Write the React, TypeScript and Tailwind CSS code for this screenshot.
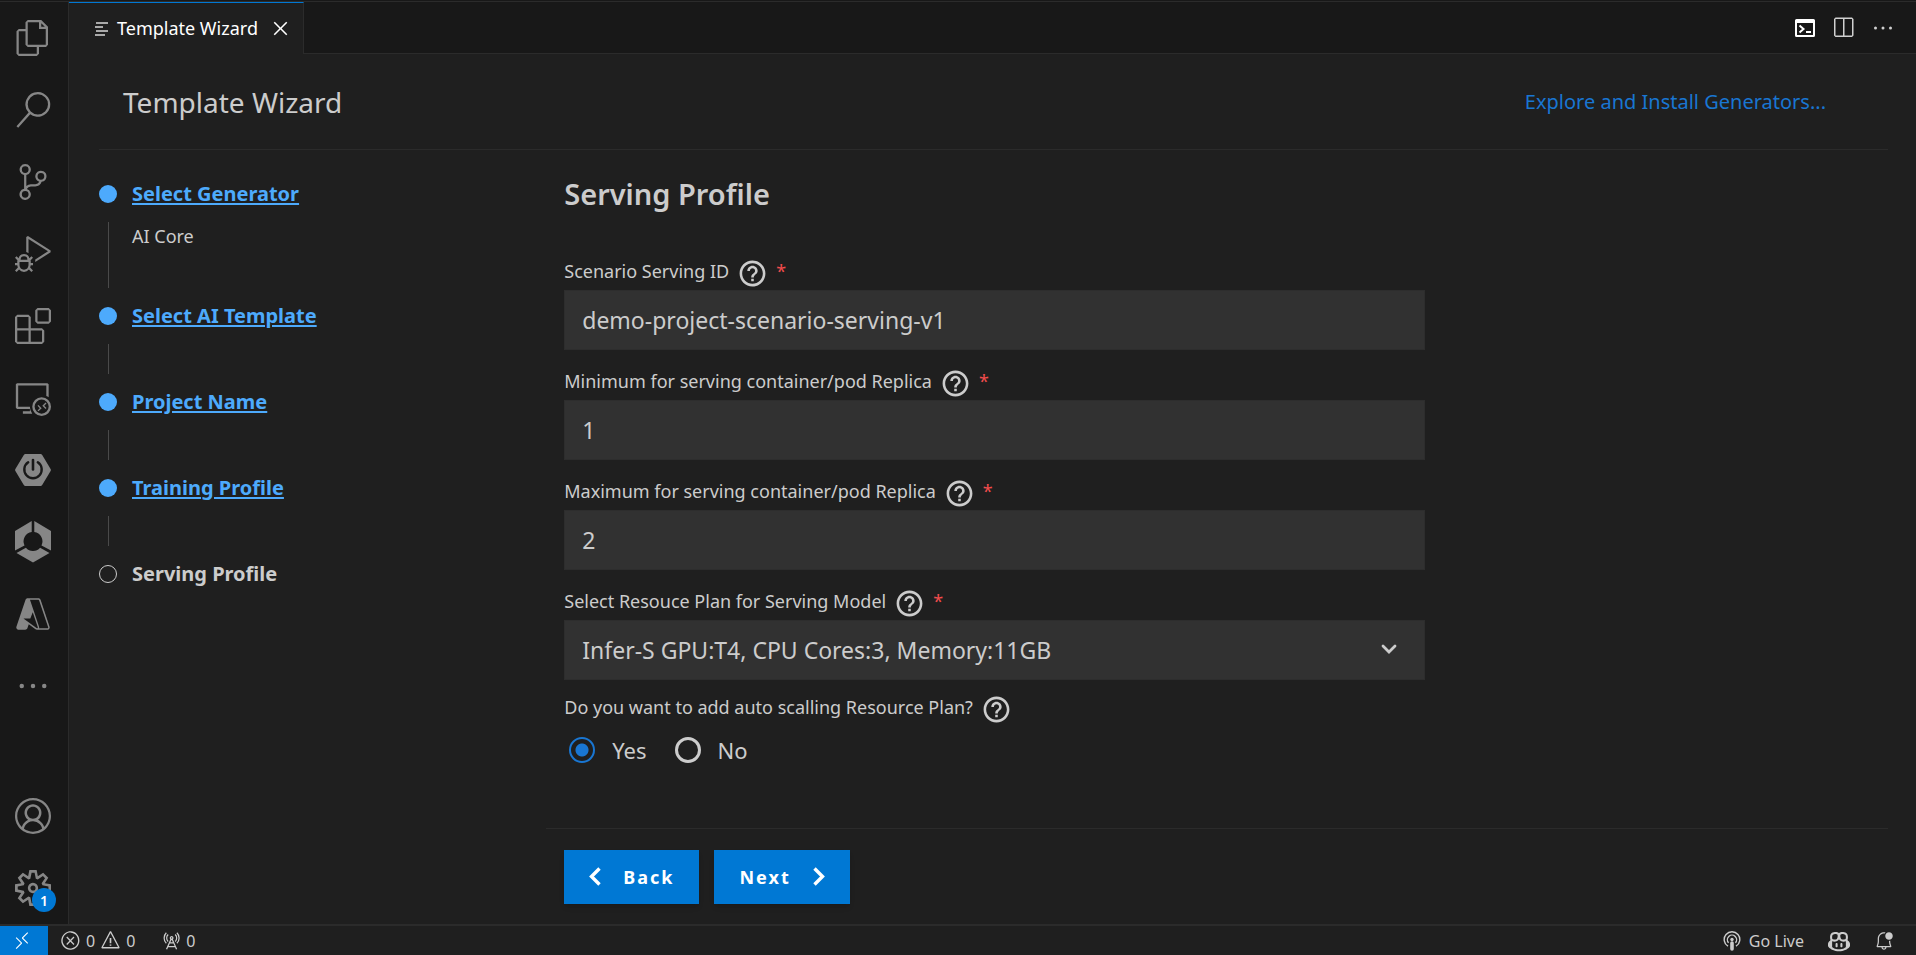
import { useState } from "react";
import type { ReactNode } from "react";
import {
  VscAccount,
  VscAzure,
  VscBellDot,
  VscClose,
  VscCopilot,
  VscDebugAlt,
  VscEllipsis,
  VscError,
  VscExtensions,
  VscFiles,
  VscRadioTower,
  VscRemote,
  VscRemoteExplorer,
  VscSearch,
  VscSettingsGear,
  VscSourceControl,
  VscSplitHorizontal,
  VscWarning,
} from "react-icons/vsc";
import { MdHelpOutline } from "react-icons/md";

function PowerHexIcon() {
  return (
    <svg width="36" height="36" viewBox="0 0 36 36" aria-hidden="true">
      <path d="M10.500 2h15a2 2 0 0 1 1.700 1l8.400 14a2 2 0 0 1 0 2l-8.400 14a2 2 0 0 1-1.700 1h-15a2 2 0 0 1-1.700-1L.4 19a2 2 0 0 1 0-2L8.800 3a2 2 0 0 1 1.700-1z" fill="#868686" />
      <path d="M18 8v9.500" stroke="#181818" strokeWidth="2.600" strokeLinecap="round" fill="none" />
      <path d="M13.200 10.300a8.700 8.700 0 1 0 9.600 0" stroke="#181818" strokeWidth="2.400" strokeLinecap="round" fill="none" />
    </svg>
  );
}

function HexRingIcon() {
  return (
    <svg width="36" height="42" viewBox="0 0 36 42" aria-hidden="true">
      <path d="M16.700 0v11A9.400 9.400 0 0 0 9.500 24.500L0 29.500V10z" fill="#868686" />
      <path d="M19.300 0v11A9.400 9.400 0 0 1 26.500 24.500L36 29.500V10z" fill="#868686" />
      <path d="M1.500 32l9.400-5.200a9.400 9.400 0 0 0 14.200 0l9.400 5.200L18 41.500z" fill="#868686" />
    </svg>
  );
}

function LinesIcon() {
  return (
    <svg width="14" height="14" viewBox="0 0 14 14" fill="none" stroke="#d8d8d8" strokeWidth="1.500" aria-hidden="true">
      <path d="M1 1h12M0 5h8M1 9h12M0 13h10" />
    </svg>
  );
}

function TerminalIcon() {
  return (
    <svg width="20" height="18" viewBox="0 0 20 18" aria-hidden="true">
      <path fillRule="evenodd" d="M1.500 0h17A1.500 1.500 0 0 1 20 1.500v15a1.500 1.500 0 0 1-1.500 1.500h-17A1.500 1.500 0 0 1 0 16.500v-15A1.500 1.500 0 0 1 1.500 0zM2 4v12h16V4z" fill="#fff" />
      <path d="M4.500 6.500L8.500 10l-4 3.500" fill="none" stroke="#fff" strokeWidth="2" />
      <path d="M11 13h5" stroke="#fff" strokeWidth="2" />
    </svg>
  );
}

function BroadcastIcon() {
  return (
    <svg width="18" height="20" viewBox="0 0 18 20" fill="none" stroke="#ccc" aria-hidden="true">
      <path d="M5 15.200a7.800 7.800 0 1 1 8 0" strokeWidth="1.400" />
      <path d="M5.600 11.800a4.600 4.600 0 1 1 6.800 0" strokeWidth="1.400" />
      <circle cx="9" cy="8.500" r="1.700" fill="#ccc" stroke="none" />
      <path d="M9 12v6" strokeWidth="3.600" strokeLinecap="round" />
    </svg>
  );
}

const topItems: { name: string; icon: ReactNode }[] = [
  { name: "Explorer", icon: <VscFiles size={36} /> },
  { name: "Search", icon: <VscSearch size={36} /> },
  { name: "Source Control", icon: <VscSourceControl size={36} /> },
  { name: "Run and Debug", icon: <VscDebugAlt size={36} /> },
  { name: "Extensions", icon: <VscExtensions size={36} /> },
  { name: "Remote Explorer", icon: <VscRemoteExplorer size={36} /> },
  { name: "Spring Boot", icon: <PowerHexIcon /> },
  { name: "Project Accelerator", icon: <HexRingIcon /> },
  { name: "Azure", icon: <VscAzure size={36} /> },
  { name: "Additional Views", icon: <VscEllipsis size={36} /> },
];

function ActivityBar() {
  return (
    <nav className="flex w-[69px] shrink-0 flex-col justify-between border-r border-[#2b2b2b] bg-[#181818] pr-0.5 text-[#868686]">
      <div className="flex flex-col">
        {topItems.map((item) => (
          <button key={item.name} aria-label={item.name} className="flex h-[72px] items-center justify-center">
            {item.icon}
          </button>
        ))}
      </div>
      <div className="flex flex-col">
        <button aria-label="Accounts" className="flex h-[72px] items-center justify-center">
          <VscAccount size={36} />
        </button>
        <button aria-label="Manage" className="relative flex h-[72px] items-center justify-center">
          <VscSettingsGear size={36} />
          <span className="absolute right-2.5 bottom-3 flex size-6 items-center justify-center rounded-full bg-[#0078d4] text-[14px] font-semibold text-white">
            1
          </span>
        </button>
      </div>
    </nav>
  );
}

function TabBar() {
  return (
    <div className="flex h-[52px] shrink-0 bg-[#181818]">
      <div className="flex items-center gap-2 border-t border-r border-t-[#0078d4] border-r-[#2b2b2b] bg-[#1f1f1f] pr-2.5 pl-[26px] text-[18px] whitespace-nowrap text-white">
        <LinesIcon />
        <span>Template Wizard</span>
        <button aria-label="Close" className="ml-0.5 flex">
          <VscClose size={25} />
        </button>
      </div>
      <div className="flex flex-1 items-center justify-end gap-4 border-b border-[#2b2b2b] pr-[21px] text-[#d0d0d0]">
        <button aria-label="Open terminal">
          <TerminalIcon />
        </button>
        <button aria-label="Split editor">
          <VscSplitHorizontal size={24} />
        </button>
        <button aria-label="More actions">
          <VscEllipsis size={24} />
        </button>
      </div>
    </div>
  );
}

const steps = [
  { title: "Select Generator", detail: "AI Core" },
  { title: "Select AI Template" },
  { title: "Project Name" },
  { title: "Training Profile" },
  { title: "Serving Profile", current: true },
];

function Steps() {
  return (
    <ol className="flex w-1/4 shrink-0 flex-col pt-7 text-[20px] leading-8">
      {steps.map((step) => (
        <li key={step.title} className="flex gap-[15px]">
          <div className="flex w-[18px] flex-col items-center">
            <span className="flex h-8 items-center">
              {step.current ? (
                <span className="size-[18px] rounded-full border border-[#ccc]" />
              ) : (
                <span className="size-[18px] rounded-full bg-[#4daafc]" />
              )}
            </span>
            {!step.current && <span className="my-3 w-px flex-1 bg-[#4a4a4a]" />}
          </div>
          <div className="min-h-[86px]">
            {step.current ? (
              <span className="font-bold">{step.title}</span>
            ) : (
              <a href="#" className="font-bold text-[#4daafc] underline decoration-2 underline-offset-2">
                {step.title}
              </a>
            )}
            {step.detail && <p className="mt-2.5 mb-12 text-[18px] leading-8">{step.detail}</p>}
          </div>
        </li>
      ))}
    </ol>
  );
}

function FieldLabel({ id, text, required }: { id: string; text: string; required?: boolean }) {
  return (
    <div className="flex h-[30px] items-center gap-2 text-[18px]">
      <label htmlFor={id}>{text}</label>
      <MdHelpOutline size={31} className="mt-1 shrink-0" />
      {required && <span className="text-[#f14c4c]">*</span>}
    </div>
  );
}

const fieldClass =
  "h-[60px] w-full appearance-none border border-[#2d2d2d] bg-[#313131] px-[17px] text-[23px] text-[#ccc] outline-none";

function TextField({ id, text, value }: { id: string; text: string; value: string }) {
  return (
    <div className="flex flex-col gap-1">
      <FieldLabel id={id} text={text} required />
      <input id={id} type="text" defaultValue={value} className={fieldClass} />
    </div>
  );
}

const radioClass =
  "size-[26px] appearance-none rounded-full border-[3px] border-[#ccc] checked:border-2 checked:border-[#1976d2] checked:bg-[radial-gradient(circle,#1976d2_6px,transparent_7px)]";

export default function App() {
  const [scaling, setScaling] = useState("yes");
  return (
    <div className="flex min-h-screen flex-col bg-[#1f1f1f] font-['Noto_Sans',sans-serif] text-[#ccc]">
      <div className="h-0.5 shrink-0 border-b border-[#2b2b2b] bg-[#181818]" />
      <div className="flex flex-1">
        <ActivityBar />
        <div className="flex min-w-0 flex-1 flex-col">
          <TabBar />
          <main className="flex flex-1 flex-col pr-7 pl-[30px]">
            <header className="flex h-24 items-center justify-between border-b border-[#2b2b2b] pr-[62px] pl-6">
              <h1 className="text-[28px]">Template Wizard</h1>
              <a href="#" className="text-[20px] text-[#1976d2]">
                Explore and Install Generators...
              </a>
            </header>
            <div className="flex flex-1">
              <Steps />
              <section className="flex flex-1 flex-col">
                <form id="wizard" className="flex w-[65.5%] flex-col gap-3 pt-6 pl-[18px]">
                  <h2 className="mb-[30px] text-[29px] leading-10 font-semibold">Serving Profile</h2>
                  <div className="flex flex-col gap-4">
                    <TextField id="scenario" text="Scenario Serving ID" value="demo-project-scenario-serving-v1" />
                    <TextField id="min" text="Minimum for serving container/pod Replica" value="1" />
                    <TextField id="max" text="Maximum for serving container/pod Replica" value="2" />
                    <div className="flex flex-col gap-1">
                      <FieldLabel id="plan" text="Select Resouce Plan for Serving Model" required />
                      <div className="relative">
                        <select id="plan" className={fieldClass}>
                          <option>Infer-S GPU:T4, CPU Cores:3, Memory:11GB</option>
                        </select>
                        <svg width="16" height="10" viewBox="0 0 16 10" className="pointer-events-none absolute top-6 right-7" aria-hidden="true">
                          <path d="M2 2l6 6 6-6" fill="none" stroke="#ccc" strokeWidth="2.800" strokeLinecap="round" />
                        </svg>
                      </div>
                    </div>
                  </div>
                  <div className="flex flex-col gap-3">
                    <FieldLabel id="yes" text="Do you want to add auto scalling Resource Plan?" />
                    <div className="flex gap-7 pl-[5px] text-[22px] leading-8">
                      <label className="flex items-center gap-[17px]">
                        <input id="yes" type="radio" name="scaling" className={radioClass} checked={scaling === "yes"} onChange={() => setScaling("yes")} />
                        Yes
                      </label>
                      <label className="flex items-center gap-[17px]">
                        <input type="radio" name="scaling" className={radioClass} checked={scaling === "no"} onChange={() => setScaling("no")} />
                        No
                      </label>
                    </div>
                  </div>
                </form>
                <footer className="mt-auto flex gap-[15px] border-t border-[#2b2b2b] pt-[21px] pb-5 pl-[18px]">
                  <button type="button" className="flex h-[54px] items-center gap-[22px] bg-[#0078d4] px-[25px] text-[18px] font-bold tracking-[2px] text-white shadow-md">
                    <svg width="12" height="20" viewBox="0 0 12 20" aria-hidden="true">
                      <path d="M10.500 1.500L2.500 9.500l8 8" fill="none" stroke="#fff" strokeWidth="3.400" />
                    </svg>
                    Back
                  </button>
                  <button type="button" className="flex h-[54px] items-center gap-[22px] bg-[#0078d4] px-[25px] text-[18px] font-bold tracking-[2px] text-white shadow-md">
                    Next
                    <svg width="12" height="20" viewBox="0 0 12 20" aria-hidden="true">
                      <path d="M1.500 1.500l8 8-8 8" fill="none" stroke="#fff" strokeWidth="3.400" />
                    </svg>
                  </button>
                </footer>
              </section>
            </div>
          </main>
        </div>
      </div>
      <footer className="flex h-[31px] shrink-0 items-stretch justify-between border-t-2 border-[#2b2b2b] text-[16px]">
        <div className="flex items-stretch">
          <button aria-label="Open a remote window" className="flex w-12 items-center justify-center bg-[#0078d4] pr-1 text-white">
            <VscRemote size={20} />
          </button>
          <button className="flex items-center gap-[5px] pl-3">
            <VscError size={21} />0<VscWarning size={21} />0
          </button>
          <button className="flex items-center gap-[5px] pl-[26px]">
            <VscRadioTower size={20} />0
          </button>
        </div>
        <div className="flex items-center gap-6 pr-[22px]">
          <button className="flex items-center gap-2">
            <BroadcastIcon />
            Go Live
          </button>
          <button aria-label="Copilot">
            <VscCopilot size={22} />
          </button>
          <button aria-label="Notifications">
            <VscBellDot size={20} />
          </button>
        </div>
      </footer>
    </div>
  );
}
